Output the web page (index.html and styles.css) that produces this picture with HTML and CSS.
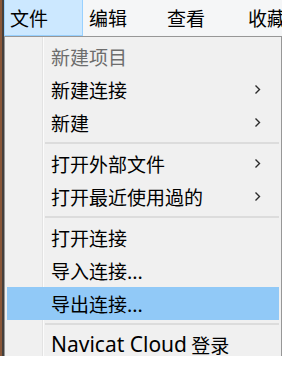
FILE: index.html
```html
<!DOCTYPE html>
<html lang="zh-CN">
<head>
<meta charset="utf-8">
<link rel="stylesheet" href="styles.css">
</head>
<body>
<div class="app">
  <div class="strip"></div>
  <div class="main">
    <div class="menubar">
      <div class="bar-item active w1">文件</div>
      <div class="bar-item w2">编辑</div>
      <div class="bar-item w3">查看</div>
      <div class="bar-item">收藏</div>
    </div>
    <div class="menu">
      <div class="item disabled">新建项目</div>
      <div class="item">新建连接<svg class="chev" width="7" height="11" viewBox="0 0 7 11"><polyline points="1.5,1.5 5.5,5.5 1.5,9.5" fill="none" stroke="#2b2b2b" stroke-width="1.4"/></svg></div>
      <div class="item">新建<svg class="chev" width="7" height="11" viewBox="0 0 7 11"><polyline points="1.5,1.5 5.5,5.5 1.5,9.5" fill="none" stroke="#2b2b2b" stroke-width="1.4"/></svg></div>
      <div class="sep"></div>
      <div class="item">打开外部文件<svg class="chev" width="7" height="11" viewBox="0 0 7 11"><polyline points="1.5,1.5 5.5,5.5 1.5,9.5" fill="none" stroke="#2b2b2b" stroke-width="1.4"/></svg></div>
      <div class="item">打开最近使用過的<svg class="chev" width="7" height="11" viewBox="0 0 7 11"><polyline points="1.5,1.5 5.5,5.5 1.5,9.5" fill="none" stroke="#2b2b2b" stroke-width="1.4"/></svg></div>
      <div class="sep"></div>
      <div class="item">打开连接</div>
      <div class="item">导入连接...</div>
      <div class="item hover">导出连接...</div>
      <div class="sep"></div>
      <div class="item"><span class="latin">Navicat Cloud</span>&nbsp;登录</div>
    </div>
  </div>
</div>
</body>
</html>
```
FILE: styles.css
```css
html, body {
  margin: 0;
  padding: 0;
  background: #ffffff;
}
body {
  width: 282px;
  height: 368px;
  overflow: hidden;
  font-family: "Noto Sans CJK SC", "Noto Sans", sans-serif;
  font-size: 19px;
  color: #000;
}
.app {
  display: flex;
  height: 356px;
  overflow: hidden;
}
.strip {
  flex: none;
  width: 4px;
  background: linear-gradient(to right, #8a5738 0 2px, #45403d 2px 4px);
}
.main {
  flex: 1;
  display: flex;
  flex-direction: column;
  background: #f3f4f5;
}
.menubar {
  flex: none;
  height: 36px;
  display: flex;
  background: #f5f6f7;
}
.bar-item {
  box-sizing: border-box;
  height: 36px;
  line-height: 35px;
  padding-left: 5px;
  border: 1px solid transparent;
  border-top: none;
  white-space: nowrap;
}
.bar-item.w1 { width: 79px; }
.bar-item.w2 { width: 78px; }
.bar-item.w3 { width: 81px; }
.bar-item.active {
  background: #cce8ff;
  border-color: #99d1ff;
}
.menu {
  flex: 1;
  margin-right: 5px;
  border: 1px solid #979797;
  border-bottom: none;
  padding: 3px 2px 0 2px;
  background: linear-gradient(to right, #f0f0f0 0 37px, #e3e3e3 37px 38px, #fbfbfb 38px 39px, #f0f0f0 39px);
  box-shadow: 3px 3px 3px rgba(0, 0, 0, 0.35);
}
.item {
  display: flex;
  align-items: center;
  height: 33px;
  line-height: 33px;
  padding-left: 44px;
  padding-right: 13px;
  white-space: nowrap;
}
.item.disabled {
  color: #6d6d6d;
}
.item.hover {
  background: #91c9f7;
}
.chev {
  margin-left: auto;
  margin-right: 5px;
  display: block;
}
.sep {
  height: 8px;
  display: flex;
  align-items: center;
  padding-left: 38px;
}
.sep::after {
  content: "";
  flex: 1;
  height: 2px;
  background: #dcdcdc;
}
.latin {
  font-family: "Noto Sans", sans-serif;
  font-size: 21px;
}
```
